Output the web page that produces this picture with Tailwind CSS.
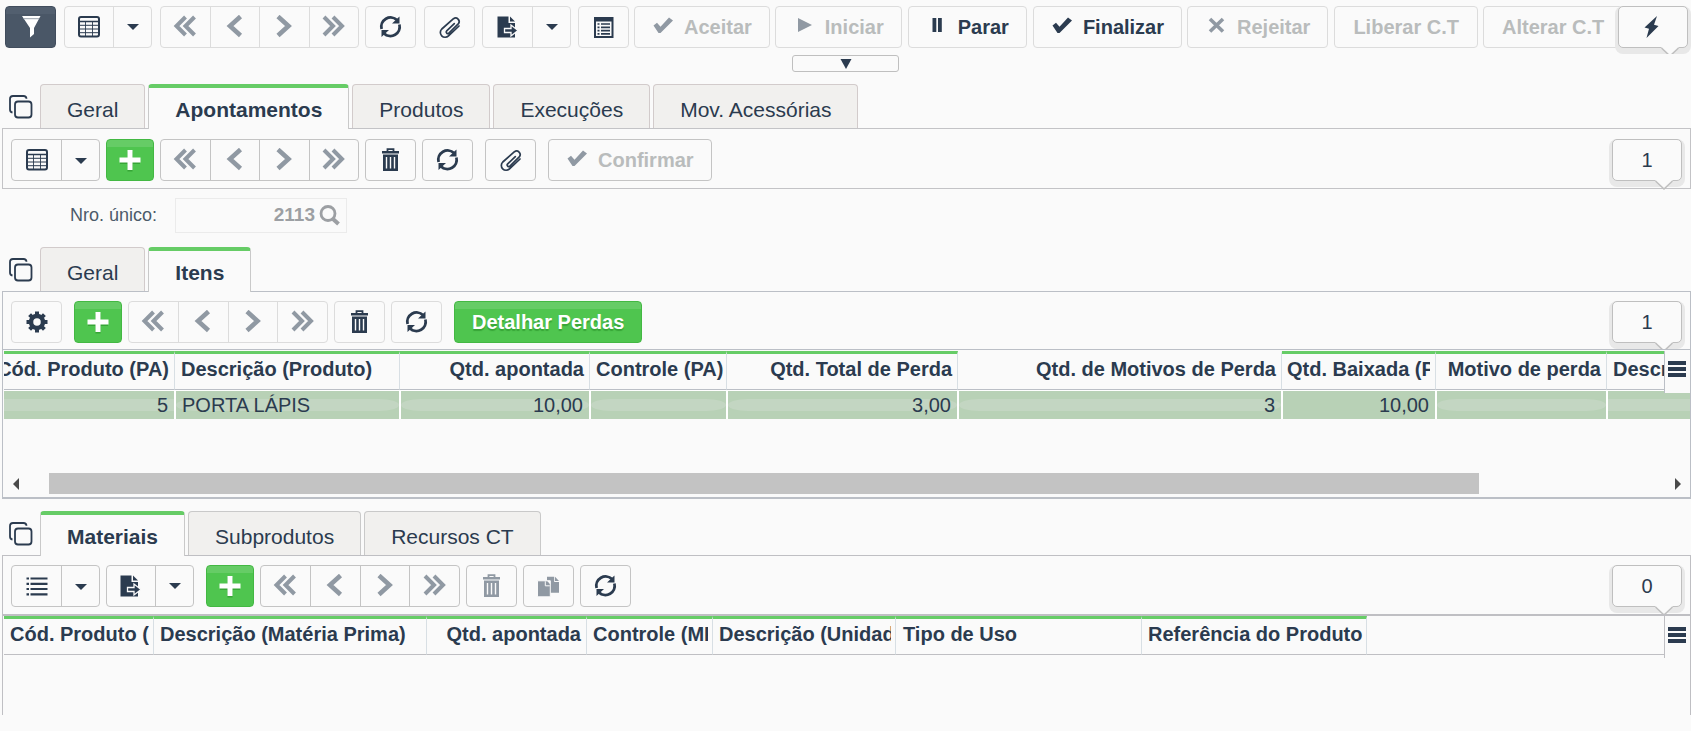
<!DOCTYPE html>
<html lang="pt-BR">
<head>
    <meta charset="UTF-8" />
    <meta name="viewport" content="width=device-width, initial-scale=1.0" />
    <title>Apontamentos</title>
    <script src="https://cdn.jsdelivr.net/npm/@tailwindcss/browser@4"></script>
</head>
<body class="bg-[#fafafa] text-[#2b3b4f] font-['Liberation_Sans',Arial,sans-serif] min-h-screen flex flex-col overflow-x-hidden">

<!-- Ícones -->
<svg class="hidden" xmlns="http://www.w3.org/2000/svg">
    <symbol id="i-filter" viewBox="0 0 24 24"><path fill="currentColor" d="M3 1h18.5L15 13v6l-4 3.5V13z"/><path d="M4.5 3.7h15.5" stroke="#9aa3ad" stroke-width="1"/></symbol>
    <symbol id="i-grid" viewBox="0 0 24 24" fill="none" stroke="currentColor"><rect x="2" y="2" width="20" height="19.5" rx="2" stroke-width="2"/><path d="M2 6.500h20" stroke-width="1.500"/><path d="M2 10.300h20M2 14h20M2 17.700h20" stroke-width="1"/><path d="M8.500 6.500v15M15.500 6.500v15" stroke-width=".9"/></symbol>
    <symbol id="i-caret" viewBox="0 0 12 6"><path fill="currentColor" d="M0 0h12L6 6z"/></symbol>
    <symbol id="i-first" viewBox="0 0 24 24" fill="none" stroke="currentColor" stroke-width="4"><path d="M12.500 2L3.500 11l9 9M21.500 2l-9 9 9 9"/></symbol>
    <symbol id="i-prev" viewBox="0 0 24 24" fill="none" stroke="currentColor" stroke-width="4.600"><path d="M17.500 1.500L7 11l10.500 9.500"/></symbol>
    <symbol id="i-next" viewBox="0 0 24 24" fill="none" stroke="currentColor" stroke-width="4.600"><path d="M6 1.500L16.500 11 6 20.500"/></symbol>
    <symbol id="i-last" viewBox="0 0 24 24" fill="none" stroke="currentColor" stroke-width="4"><path d="M2 2l9 9-9 9M11 2l9 9-9 9"/></symbol>
    <symbol id="i-refresh" viewBox="0 0 24 24"><path d="M2.600 14A9.300 9.300 0 0 1 18 5M20.400 9.500A9.300 9.300 0 0 1 5 18.500" fill="none" stroke="currentColor" stroke-width="2.800"/><path fill="currentColor" d="M20.500 1.500v7h-7.500zM2.500 22v-7H10z"/></symbol>
    <symbol id="i-clip" viewBox="0 0 24 24" fill="none" stroke="currentColor" stroke-width="1.700" stroke-linecap="round" stroke-linejoin="round"><path d="M15.800 8.200L8.200 15.400a1.500 1.500 0 0 0 2.200 2.200l9.600-9.400a3.600 3.600 0 0 0-5-5L3.300 13.500a4.700 4.700 0 0 0 6.700 6.900L20.500 10.500" transform="translate(.5 .5)"/></symbol>
    <symbol id="i-export" viewBox="0 0 24 24"><path fill="currentColor" d="M1.500 1.500h11v6.500h6.500v14.500h-17.500z"/><path fill="currentColor" d="M14 1.500l5 5h-5z"/><path fill="currentColor" stroke="#fafafa" stroke-width="1.300" d="M8.500 13.500h6.500v-3.500l7 5.500-7 5.500v-3.500h-6.500z"/></symbol>
    <symbol id="i-form" viewBox="0 0 24 24"><path fill="currentColor" d="M2 2h19.500v21H2zM4 6.500v14.500h15.500V6.500z" fill-rule="evenodd"/><path d="M5.500 9h2M5.500 12.300h2M5.500 15.600h2M5.500 18.900h2M9 9h9M9 12.300h9M9 15.600h9M9 18.900h9" stroke="currentColor" stroke-width="1.700"/></symbol>
    <symbol id="i-check" viewBox="0 0 22 22"><path fill="currentColor" d="M1.500 9.500L5 6.700l3.500 4L17 1.500l4 3L8.500 17H6.500z"/></symbol>
    <symbol id="i-play" viewBox="0 0 22 22"><path fill="currentColor" d="M5 2l14 7-14 7z"/></symbol>
    <symbol id="i-pause" viewBox="0 0 22 22"><path fill="currentColor" d="M6.500 2h3.800v14H6.500zM12 2h3.800v14H12z"/></symbol>
    <symbol id="i-x" viewBox="0 0 22 22"><path d="M5 3l13 12.500M18 3L5 15.500" stroke="currentColor" stroke-width="3.600"/></symbol>
    <symbol id="i-trash" viewBox="0 0 24 24"><path fill="none" stroke="currentColor" stroke-width="1.800" d="M8.500 3.500V1.200h6v2.300"/><path fill="currentColor" d="M3 3h17v2.500H3zM4 6.500h15V23H4z"/><path d="M7.500 9v11.500M11.500 9v11.500M15.500 9v11.500" stroke="#fafafa" stroke-width="1.400"/></symbol>
    <symbol id="i-plus" viewBox="0 0 24 24"><path d="M12 3.500v20M2 13.500h20" stroke="#37a537" stroke-width="5"/><path d="M12 2v20M1.500 12h21" stroke="#fff" stroke-width="5"/></symbol>
    <symbol id="i-gear" viewBox="0 0 24 24"><circle cx="12" cy="12" r="6" fill="none" stroke="currentColor" stroke-width="4.500"/><path d="M12 1.500v4M12 18.500v4M1.500 12h4M18.500 12h4M4.600 4.600l3 3M16.400 16.400l3 3M4.600 19.400l3-3M16.400 7.600l3-3" stroke="currentColor" stroke-width="4"/></symbol>
    <symbol id="i-list" viewBox="0 0 24 24"><path d="M1.500 4.500h2.500M1.500 9.800h2.500M1.500 15h2.500M1.500 20.300h2.500M5.500 4.500h17M5.500 9.800h17M5.500 15h17M5.500 20.300h17" stroke="currentColor" stroke-width="2.200"/></symbol>
    <symbol id="i-files" viewBox="0 0 24 24"><path fill="currentColor" d="M10 2.700h7.200v5.300H22v10.700H10z"/><path fill="currentColor" d="M18 2.700l4 4.300h-4z"/><path fill="currentColor" stroke="#fafafa" stroke-width="1" d="M.5 6.800h12.800v16H.5z"/><path d="M8.300 7.300v4.500h4.500" fill="none" stroke="#fafafa" stroke-width="1"/><path fill="#fafafa" d="M9.800 6.500h3.500v4z"/></symbol>
    <symbol id="i-tabs" viewBox="0 0 24 24" fill="none" stroke="currentColor" stroke-width="1.800"><rect x="6" y="6.500" width="16.500" height="16" rx="3"/><path d="M3.500 17.500A3 3 0 0 1 1 14.500V4a3 3 0 0 1 3-3h10.500a3 3 0 0 1 3 2.800"/></symbol>
    <symbol id="i-search" viewBox="0 0 22 22" fill="none" stroke="currentColor"><circle cx="9" cy="8.500" r="7" stroke-width="2.800"/><path d="M13.500 13.500l6 5.500" stroke-width="4"/></symbol>
    <symbol id="i-bolt" viewBox="0 0 24 24"><path fill="currentColor" d="M18 1l-12.500 11.500 4.500 1.300L7.500 23 19.500 11l-4.500-1.200z"/></symbol>
    <symbol id="i-menu" viewBox="0 0 20 18"><path fill="currentColor" d="M1 1h18v4H1zM1 7h18v4H1zM1 13h18v4H1z"/></symbol>
    <symbol id="i-tail" viewBox="0 0 18 10"><path fill="#fafafa" d="M0 0h18L9 9z"/><path d="M.5 1L9 9l8.500-8" fill="none" stroke="#bfbfbf" stroke-width="1.500"/></symbol>
</svg>

<!-- Barra principal -->
<header class="relative flex h-[54px] pt-[6px] pl-[5px] overflow-hidden text-[20px] font-bold whitespace-nowrap">
    <button aria-label="Filtro" class="w-[51px] h-[42px] shrink-0 flex items-center justify-center rounded-sm border border-[#414d5d] text-white bg-[linear-gradient(#525f6f_7px,#4a5767_7px)]"><svg class="size-6"><use href="#i-filter"/></svg></button>
    <div class="ml-2 w-[88px] h-[42px] shrink-0 flex rounded-sm border border-[#dcdcdc]">
        <button aria-label="Grade" class="w-[49px] flex items-center justify-center border-r border-[#dcdcdc]"><svg class="size-6"><use href="#i-grid"/></svg></button>
        <button aria-label="Opções da grade" class="flex-1 flex items-center justify-center"><svg class="w-3 h-[6px]"><use href="#i-caret"/></svg></button>
    </div>
    <div class="ml-2 w-[199px] h-[42px] shrink-0 flex rounded-sm border border-[#dcdcdc] divide-x divide-[#dcdcdc] text-[#9099a3]">
        <button aria-label="Primeiro" class="flex-1 flex items-center justify-center"><svg class="size-6"><use href="#i-first"/></svg></button>
        <button aria-label="Anterior" class="flex-1 flex items-center justify-center"><svg class="size-6"><use href="#i-prev"/></svg></button>
        <button aria-label="Próximo" class="flex-1 flex items-center justify-center"><svg class="size-6"><use href="#i-next"/></svg></button>
        <button aria-label="Último" class="flex-1 flex items-center justify-center"><svg class="size-6"><use href="#i-last"/></svg></button>
    </div>
    <button aria-label="Atualizar" class="ml-[6px] w-[51px] h-[42px] shrink-0 flex items-center justify-center rounded-sm border border-[#dcdcdc]"><svg class="size-6"><use href="#i-refresh"/></svg></button>
    <button aria-label="Anexos" class="ml-2 w-[51px] h-[42px] shrink-0 flex items-center justify-center rounded-sm border border-[#dcdcdc]"><svg class="size-6"><use href="#i-clip"/></svg></button>
    <div class="ml-[7px] w-[89px] h-[42px] shrink-0 flex rounded-sm border border-[#dcdcdc]">
        <button aria-label="Exportar" class="w-[50px] flex items-center justify-center border-r border-[#dcdcdc]"><svg class="size-6"><use href="#i-export"/></svg></button>
        <button aria-label="Opções de exportação" class="flex-1 flex items-center justify-center"><svg class="w-3 h-[6px]"><use href="#i-caret"/></svg></button>
    </div>
    <button aria-label="Formulário" class="ml-[7px] w-[51px] h-[42px] shrink-0 flex items-center justify-center rounded-sm border border-[#dcdcdc]"><svg class="size-6"><use href="#i-form"/></svg></button>
    <button disabled class="ml-[5px] h-[42px] shrink-0 flex items-center gap-[10px] px-[17px] rounded-sm border border-[#dcdcdc] text-[#b9bcbc]"><svg class="size-[22px] text-[#9099a3]"><use href="#i-check"/></svg>Aceitar</button>
    <button disabled class="ml-[5px] h-[42px] shrink-0 flex items-center gap-[10px] px-[17px] rounded-sm border border-[#dcdcdc] text-[#b9bcbc]"><svg class="size-[22px] text-[#9099a3]"><use href="#i-play"/></svg>Iniciar</button>
    <button class="ml-[6px] h-[42px] shrink-0 flex items-center gap-[10px] px-[17px] rounded-sm border border-[#dcdcdc]"><svg class="size-[22px]"><use href="#i-pause"/></svg>Parar</button>
    <button class="ml-[6px] h-[42px] shrink-0 flex items-center gap-[10px] px-[17px] rounded-sm border border-[#dcdcdc]"><svg class="size-[22px]"><use href="#i-check"/></svg>Finalizar</button>
    <button disabled class="ml-[5px] h-[42px] shrink-0 flex items-center gap-[10px] px-[17px] rounded-sm border border-[#dcdcdc] text-[#b9bcbc]"><svg class="size-[22px] text-[#9099a3]"><use href="#i-x"/></svg>Rejeitar</button>
    <button disabled class="ml-[6px] h-[42px] shrink-0 px-[18px] rounded-sm border border-[#dcdcdc] text-[#b9bcbc]">Liberar C.T</button>
    <button disabled class="ml-[5px] h-[42px] shrink-0 px-[18px] rounded-sm border border-[#dcdcdc] text-[#b9bcbc]">Alterar C.T</button>
    <!-- Balão de ações rápidas -->
    <button aria-label="Ações rápidas" class="absolute right-[3px] top-[6px] w-[70px] h-[42px] flex items-center justify-center rounded-[5px] border border-[#bfbfbf] bg-[#fafafa] shadow-[0_3px_0_3px_#e8e8e8] pr-1"><svg class="size-6"><use href="#i-bolt"/></svg><svg class="absolute right-2 -bottom-[10px] w-[18px] h-[10px]"><use href="#i-tail"/></svg></button>
</header>
<button aria-label="Expandir" class="mt-[1px] mx-auto w-[107px] h-[17px] shrink-0 flex items-center justify-center rounded-[3px] border border-[#bfbfbf]"><svg class="w-3 h-[10px]" viewBox="0 0 12 10"><path fill="currentColor" d="M.5 0h11L6 10z"/></svg></button>

<!-- Abas principais -->
<nav class="mt-3 flex h-11 shrink-0 pl-[9px] text-[21px]">
    <button aria-label="Abas" class="w-[31px] flex items-center"><svg class="size-6 mt-[2px]"><use href="#i-tabs"/></svg></button>
    <div role="tablist" class="flex gap-[3px]">
        <button role="tab" class="px-[26px] pt-[6px] rounded-t-sm border border-b-0 border-[#d2cbcb] bg-[#f1f0ee]">Geral</button>
        <button role="tab" aria-selected="true" class="relative -mb-px px-[26px] pt-[2px] rounded-t-sm border border-b-0 border-t-4 border-[#c9c9c9] border-t-[#66cc66] bg-[#fafafa] font-bold">Apontamentos</button>
        <button role="tab" class="px-[26px] pt-[6px] rounded-t-sm border border-b-0 border-[#d2cbcb] bg-[#f1f0ee]">Produtos</button>
        <button role="tab" class="px-[26px] pt-[6px] rounded-t-sm border border-b-0 border-[#d2cbcb] bg-[#f1f0ee]">Execuções</button>
        <button role="tab" class="px-[26px] pt-[6px] rounded-t-sm border border-b-0 border-[#d2cbcb] bg-[#f1f0ee]">Mov. Acessórias</button>
    </div>
</nav>
<section class="ml-[2px] h-[61px] shrink-0 flex pt-[10px] px-2 border border-[#c3c3c6] text-[20px]">
    <div class="w-[89px] h-[42px] flex rounded-sm border border-[#c4c4c4]">
        <button aria-label="Grade" class="w-[50px] flex items-center justify-center border-r border-[#c4c4c4]"><svg class="size-6"><use href="#i-grid"/></svg></button>
        <button aria-label="Opções da grade" class="flex-1 flex items-center justify-center pt-[2px]"><svg class="w-3 h-[6px]"><use href="#i-caret"/></svg></button>
    </div>
    <button aria-label="Incluir" class="ml-[6px] w-12 h-[42px] flex items-center justify-center rounded-sm border border-[#43b843] bg-[linear-gradient(#66cc66_7px,#4fc54f_7px)]"><svg class="size-6"><use href="#i-plus"/></svg></button>
    <div class="ml-[6px] w-[199px] h-[42px] flex rounded-sm border border-[#c4c4c4] divide-x divide-[#c4c4c4] text-[#9099a3]">
        <button aria-label="Primeiro" class="flex-1 flex items-center justify-center"><svg class="size-6"><use href="#i-first"/></svg></button>
        <button aria-label="Anterior" class="flex-1 flex items-center justify-center"><svg class="size-6"><use href="#i-prev"/></svg></button>
        <button aria-label="Próximo" class="flex-1 flex items-center justify-center"><svg class="size-6"><use href="#i-next"/></svg></button>
        <button aria-label="Último" class="flex-1 flex items-center justify-center"><svg class="size-6"><use href="#i-last"/></svg></button>
    </div>
    <button aria-label="Excluir" class="ml-[6px] w-[51px] h-[42px] flex items-center justify-center rounded-sm border border-[#c4c4c4]"><svg class="size-6"><use href="#i-trash"/></svg></button>
    <button aria-label="Atualizar" class="ml-[6px] w-[51px] h-[42px] flex items-center justify-center rounded-sm border border-[#c4c4c4]"><svg class="size-6"><use href="#i-refresh"/></svg></button>
    <button aria-label="Anexos" class="ml-3 w-[51px] h-[42px] flex items-center justify-center rounded-sm border border-[#c4c4c4]"><svg class="size-6"><use href="#i-clip"/></svg></button>
    <button disabled class="ml-3 h-[42px] flex items-center gap-[10px] px-[17px] rounded-sm border border-[#c4c4c4] font-bold text-[#b9bcbc]"><svg class="size-[22px] text-[#9099a3]"><use href="#i-check"/></svg>Confirmar</button>
    <div class="relative ml-auto w-[70px] h-[42px] flex items-center justify-center rounded-[5px] border border-[#bfbfbf] bg-[#fafafa] shadow-[0_3px_0_3px_#e8e8e8]">1<svg class="absolute right-2 -bottom-[10px] w-[18px] h-[10px]"><use href="#i-tail"/></svg></div>
</section>

<div class="mt-[9px] flex items-center pl-[70px] shrink-0">
    <label for="nro" class="w-[105px] text-[18px] text-[#4c5a6a]">Nro. único:</label>
    <div class="w-[172px] h-[35px] flex items-center border border-[#ebebeb] pr-[5px] text-[#9c9fa3]">
        <input id="nro" type="text" value="2113" readonly class="min-w-0 flex-1 pr-1 text-right text-[19px] font-bold outline-none" />
        <button aria-label="Pesquisar"><svg class="size-[22px]"><use href="#i-search"/></svg></button>
    </div>
</div>

<!-- Abas do apontamento -->
<nav class="mt-[14px] flex h-11 shrink-0 pl-[9px] text-[21px]">
    <button aria-label="Abas" class="w-[31px] flex items-center"><svg class="size-6 mt-[2px]"><use href="#i-tabs"/></svg></button>
    <div role="tablist" class="flex gap-[3px]">
        <button role="tab" class="px-[26px] pt-[6px] rounded-t-sm border border-b-0 border-[#d2cbcb] bg-[#f1f0ee]">Geral</button>
        <button role="tab" aria-selected="true" class="relative -mb-px px-[26px] pt-[2px] rounded-t-sm border border-b-0 border-t-4 border-[#c9c9c9] border-t-[#66cc66] bg-[#fafafa] font-bold">Itens</button>
    </div>
</nav>
<section class="ml-[2px] shrink-0 border border-b-2 border-[#bbbfc6] text-[20px]">
    <div class="h-[58px] flex pt-[9px] px-2 border-b border-[#bbbfc6] overflow-hidden">
        <button aria-label="Configurar" class="w-[51px] h-[42px] flex items-center justify-center rounded-sm border border-[#dcdcdc]"><svg class="size-6"><use href="#i-gear"/></svg></button>
        <button aria-label="Incluir" class="ml-3 w-12 h-[42px] flex items-center justify-center rounded-sm border border-[#43b843] bg-[linear-gradient(#66cc66_7px,#4fc54f_7px)]"><svg class="size-6"><use href="#i-plus"/></svg></button>
        <div class="ml-[6px] w-[200px] h-[42px] flex rounded-sm border border-[#dcdcdc] divide-x divide-[#dcdcdc] text-[#9099a3]">
            <button aria-label="Primeiro" class="flex-1 flex items-center justify-center"><svg class="size-6"><use href="#i-first"/></svg></button>
            <button aria-label="Anterior" class="flex-1 flex items-center justify-center"><svg class="size-6"><use href="#i-prev"/></svg></button>
            <button aria-label="Próximo" class="flex-1 flex items-center justify-center"><svg class="size-6"><use href="#i-next"/></svg></button>
            <button aria-label="Último" class="flex-1 flex items-center justify-center"><svg class="size-6"><use href="#i-last"/></svg></button>
        </div>
        <button aria-label="Excluir" class="ml-[6px] w-[51px] h-[42px] flex items-center justify-center rounded-sm border border-[#dcdcdc]"><svg class="size-6"><use href="#i-trash"/></svg></button>
        <button aria-label="Atualizar" class="ml-[6px] w-[51px] h-[42px] flex items-center justify-center rounded-sm border border-[#dcdcdc]"><svg class="size-6"><use href="#i-refresh"/></svg></button>
        <button class="ml-3 h-[42px] px-[17px] rounded-sm border border-[#43b843] bg-[linear-gradient(#66cc66_7px,#4fc54f_7px)] text-white font-bold [text-shadow:0_2px_1px_#37a537]">Detalhar Perdas</button>
        <div class="relative ml-auto w-[70px] h-[42px] flex items-center justify-center rounded-[5px] border border-[#bfbfbf] bg-[#fafafa] shadow-[0_3px_0_3px_#e8e8e8]">1<svg class="absolute right-2 -bottom-[10px] w-[18px] h-[10px]"><use href="#i-tail"/></svg></div>
    </div>
    <div class="relative h-[123px] pt-px pl-px overflow-hidden">
        <table class="w-full table-fixed border-separate border-spacing-0 whitespace-nowrap">
            <colgroup>
                <col class="w-[171px]" /><col class="w-[225px]" /><col class="w-[190px]" /><col class="w-[137px]" /><col class="w-[231px]" />
                <col class="w-[324px]" /><col class="w-[154px]" /><col class="w-[171px]" /><col />
            </colgroup>
            <thead>
                <tr class="h-[39px] leading-7">
                    <th class="p-0 pr-[5px] pb-[6px] border-t-3 border-r border-b border-r-[#d8dfe4] border-b-[#bbbfc6] border-t-[#66cc66]"><div class="flex justify-end overflow-hidden">Cód. Produto (PA)</div></th>
                    <th class="p-0 px-[6px] pb-[6px] border-t-3 border-r border-b border-r-[#d8dfe4] border-b-[#bbbfc6] border-t-[#66cc66] text-left">Descrição (Produto)</th>
                    <th class="p-0 px-[5px] pb-[6px] border-t-3 border-r border-b border-r-[#d8dfe4] border-b-[#bbbfc6] border-t-[#66cc66] text-right">Qtd. apontada</th>
                    <th class="p-0 pl-[6px] pb-[6px] border-t-3 border-r border-b border-r-[#d8dfe4] border-b-[#bbbfc6] border-t-[#66cc66] text-left">Controle (PA)</th>
                    <th class="p-0 px-[5px] pb-[6px] border-t-3 border-r border-b border-r-[#d8dfe4] border-b-[#bbbfc6] border-t-[#66cc66] text-right">Qtd. Total de Perda</th>
                    <th class="p-0 px-[5px] pb-[6px] border-t-3 border-r border-b border-r-[#d8dfe4] border-b-[#bbbfc6] border-t-transparent text-right">Qtd. de Motivos de Perda</th>
                    <th class="p-0 px-[5px] pb-[6px] border-t-3 border-r border-b border-r-[#d8dfe4] border-b-[#bbbfc6] border-t-[#66cc66] text-left"><div class="overflow-hidden">Qtd. Baixada (PA)</div></th>
                    <th class="p-0 px-[5px] pb-[6px] border-t-3 border-r border-b border-r-[#d8dfe4] border-b-[#bbbfc6] border-t-[#66cc66] text-right">Motivo de perda</th>
                    <th class="p-0 pl-[6px] pb-[6px] border-t-3 border-b border-b-[#bbbfc6] border-t-[#66cc66] text-left"><div class="overflow-hidden">Descrição</div></th>
                </tr>
            </thead>
            <tbody>
                <tr class="h-[29px] leading-7 [&>td]:relative [&>td]:bg-[#b8d1b6] [&>td]:bg-clip-padding [&>td]:p-0 [&>td]:px-[6px] [&>td]:border-t [&>td]:border-x [&>td]:border-white">
                    <td class="border-l-0! text-right before:absolute before:inset-x-0 before:top-2 before:h-3 before:rounded-r-[20px/6px] before:bg-[#c3d6c2]"><span class="relative">5</span></td>
                    <td class="before:absolute before:inset-x-0 before:top-2 before:h-3 before:rounded-[20px/6px] before:bg-[#c3d6c2]"><span class="relative">PORTA LÁPIS</span></td>
                    <td class="text-right before:absolute before:inset-x-0 before:top-2 before:h-3 before:rounded-[20px/6px] before:bg-[#c3d6c2]"><span class="relative">10,00</span></td>
                    <td class="before:absolute before:inset-x-0 before:top-2 before:h-3 before:rounded-[20px/6px] before:bg-[#c3d6c2]"></td>
                    <td class="text-right before:absolute before:inset-x-0 before:top-2 before:h-3 before:rounded-[20px/6px] before:bg-[#c3d6c2]"><span class="relative">3,00</span></td>
                    <td class="text-right before:absolute before:inset-x-0 before:top-2 before:h-3 before:rounded-[20px/6px] before:bg-[#c3d6c2]"><span class="relative">3</span></td>
                    <td class="text-right">10,00</td>
                    <td class="before:absolute before:inset-x-0 before:top-2 before:h-3 before:rounded-[20px/6px] before:bg-[#c3d6c2]"></td>
                    <td class="border-r-0! before:absolute before:inset-x-0 before:top-2 before:h-3 before:rounded-l-[20px/6px] before:bg-[#c3d6c2]"></td>
                </tr>
            </tbody>
        </table>
        <button aria-label="Colunas" class="absolute right-0 top-px w-[26px] h-[42px] flex pt-[9px] pl-[2px] border-l border-[#bbbfc6] bg-[#fafafa]"><svg class="w-5 h-[18px]"><use href="#i-menu"/></svg></button>
    </div>
    <!-- Rolagem horizontal -->
    <div class="flex items-center h-6 pb-[3px] pl-[10px] pr-[9px] text-[#4a4a4a]">
        <svg class="w-[6px] h-3 shrink-0" viewBox="0 0 6 12"><path fill="currentColor" d="M6 0v12L0 6z"/></svg>
        <div class="ml-[30px] mr-[196px] flex-1 h-[21px] bg-[#c3c3c3]"></div>
        <svg class="w-[6px] h-3 shrink-0" viewBox="0 0 6 12"><path fill="currentColor" d="M0 0v12l6-6z"/></svg>
    </div>
</section>

<!-- Abas de materiais -->
<nav class="mt-3 flex h-11 shrink-0 pl-[9px] text-[21px]">
    <button aria-label="Abas" class="w-[31px] flex items-center"><svg class="size-6 mt-[2px]"><use href="#i-tabs"/></svg></button>
    <div role="tablist" class="flex gap-[3px]">
        <button role="tab" aria-selected="true" class="relative -mb-px px-[26px] pt-[2px] rounded-t-sm border border-b-0 border-t-4 border-[#c9c9c9] border-t-[#66cc66] bg-[#fafafa] font-bold">Materiais</button>
        <button role="tab" class="px-[26px] pt-[6px] rounded-t-sm border border-b-0 border-[#c9c9c9] bg-[#f1f0ee]">Subprodutos</button>
        <button role="tab" class="px-[26px] pt-[6px] rounded-t-sm border border-b-0 border-[#c9c9c9] bg-[#f1f0ee]">Recursos CT</button>
    </div>
</nav>
<section class="ml-[2px] mb-4 flex-1 border border-b-0 border-[#bfbfc3] text-[20px]">
    <div class="h-[60px] flex pt-[9px] px-2 border-b-2 border-[#bfbfc3] overflow-hidden">
        <div class="w-[89px] h-[42px] flex rounded-sm border border-[#c4c4c4]">
            <button aria-label="Lista" class="w-[50px] flex items-center justify-center border-r border-[#c4c4c4]"><svg class="size-6"><use href="#i-list"/></svg></button>
            <button aria-label="Opções da lista" class="flex-1 flex items-center justify-center pt-[2px]"><svg class="w-3 h-[6px]"><use href="#i-caret"/></svg></button>
        </div>
        <div class="ml-[6px] w-[88px] h-[42px] flex rounded-sm border border-[#c4c4c4]">
            <button aria-label="Exportar" class="w-[49px] flex items-center justify-center border-r border-[#c4c4c4]"><svg class="size-6"><use href="#i-export"/></svg></button>
            <button aria-label="Opções de exportação" class="flex-1 flex items-center justify-center"><svg class="w-3 h-[6px]"><use href="#i-caret"/></svg></button>
        </div>
        <button aria-label="Incluir" class="ml-3 w-12 h-[42px] flex items-center justify-center rounded-sm border border-[#43b843] bg-[linear-gradient(#66cc66_7px,#4fc54f_7px)]"><svg class="size-6"><use href="#i-plus"/></svg></button>
        <div class="ml-[6px] w-[200px] h-[42px] flex rounded-sm border border-[#c4c4c4] divide-x divide-[#c4c4c4] text-[#9099a3]">
            <button aria-label="Primeiro" class="flex-1 flex items-center justify-center"><svg class="size-6"><use href="#i-first"/></svg></button>
            <button aria-label="Anterior" class="flex-1 flex items-center justify-center"><svg class="size-6"><use href="#i-prev"/></svg></button>
            <button aria-label="Próximo" class="flex-1 flex items-center justify-center"><svg class="size-6"><use href="#i-next"/></svg></button>
            <button aria-label="Último" class="flex-1 flex items-center justify-center"><svg class="size-6"><use href="#i-last"/></svg></button>
        </div>
        <button disabled aria-label="Excluir" class="ml-[6px] w-[51px] h-[42px] flex items-center justify-center rounded-sm border border-[#c4c4c4] text-[#9099a3]"><svg class="size-6"><use href="#i-trash"/></svg></button>
        <button disabled aria-label="Duplicar" class="ml-[6px] w-[51px] h-[42px] flex items-center justify-center rounded-sm border border-[#c4c4c4] text-[#9099a3]"><svg class="size-6"><use href="#i-files"/></svg></button>
        <button aria-label="Atualizar" class="ml-[6px] w-[51px] h-[42px] flex items-center justify-center rounded-sm border border-[#c4c4c4]"><svg class="size-6"><use href="#i-refresh"/></svg></button>
        <div class="relative ml-auto w-[70px] h-[42px] flex items-center justify-center rounded-[5px] border border-[#bfbfbf] bg-[#fafafa] shadow-[0_3px_0_3px_#e8e8e8]">0<svg class="absolute right-2 -bottom-[10px] w-[18px] h-[10px]"><use href="#i-tail"/></svg></div>
    </div>
    <div class="relative h-[42px] pl-px overflow-hidden">
        <table class="w-full table-fixed border-separate border-spacing-0 whitespace-nowrap">
            <colgroup>
                <col class="w-[150px]" /><col class="w-[273px]" /><col class="w-[160px]" /><col class="w-[126px]" />
                <col class="w-[183px]" /><col class="w-[246px]" /><col class="w-[225px]" /><col />
            </colgroup>
            <thead>
                <tr class="h-[39px] leading-7">
                    <th class="p-0 pl-[6px] pr-[4px] pb-[6px] border-t-3 border-r border-b border-r-[#d8dfe4] border-b-[#bfbfc3] border-t-[#66cc66] text-left"><div class="overflow-hidden">Cód. Produto (MP)</div></th>
                    <th class="p-0 px-[6px] pb-[6px] border-t-3 border-r border-b border-r-[#d8dfe4] border-b-[#bfbfc3] border-t-[#66cc66] text-left">Descrição (Matéria Prima)</th>
                    <th class="p-0 px-[5px] pb-[6px] border-t-3 border-r border-b border-r-[#d8dfe4] border-b-[#bfbfc3] border-t-[#66cc66] text-right">Qtd. apontada</th>
                    <th class="p-0 pl-[6px] pr-[4px] pb-[6px] border-t-3 border-r border-b border-r-[#d8dfe4] border-b-[#bfbfc3] border-t-[#66cc66] text-left"><div class="overflow-hidden">Controle (MP)</div></th>
                    <th class="p-0 pl-[6px] pr-[4px] pb-[6px] border-t-3 border-r border-b border-r-[#d8dfe4] border-b-[#bfbfc3] border-t-[#66cc66] text-left"><div class="overflow-hidden">Descrição (Unidade)</div></th>
                    <th class="p-0 px-[7px] pb-[6px] border-t-3 border-r border-b border-r-[#d8dfe4] border-b-[#bfbfc3] border-t-[#66cc66] text-left">Tipo de Uso</th>
                    <th class="p-0 pl-[6px] pb-[6px] border-t-3 border-r border-b border-r-[#d8dfe4] border-b-[#bfbfc3] border-t-[#66cc66] text-left">Referência do Produto</th>
                    <th class="p-0 border-b border-b-[#bfbfc3]"></th>
                </tr>
            </thead>
        </table>
        <button aria-label="Colunas" class="absolute right-0 top-0 w-[26px] h-[42px] flex pt-[10px] pl-[2px] border-l border-[#bfbfc3] bg-[#fafafa]"><svg class="w-5 h-[18px]"><use href="#i-menu"/></svg></button>
    </div>
</section>

</body>
</html>
